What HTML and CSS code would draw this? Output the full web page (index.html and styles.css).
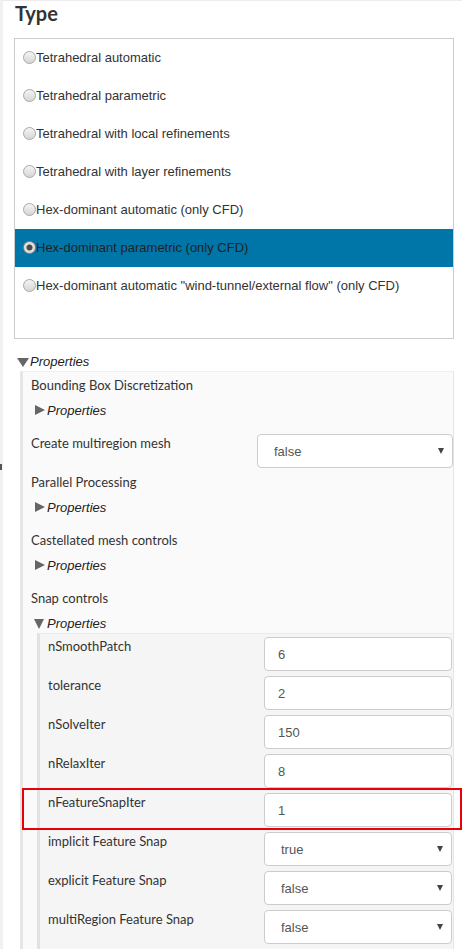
FILE: index.html
```html
<!DOCTYPE html>
<html lang="en">
<head>
<meta charset="utf-8">
<title>Mesh type</title>
<link rel="stylesheet" href="styles.css">
</head>
<body>
<div class="page">
  <div class="edge-mark"></div>
  <h2 class="title">Type</h2>
  <div class="choice-box">
    <div class="choice"><span class="radio"></span>Tetrahedral automatic</div>
    <div class="choice"><span class="radio"></span>Tetrahedral parametric</div>
    <div class="choice"><span class="radio"></span>Tetrahedral with local refinements</div>
    <div class="choice"><span class="radio"></span>Tetrahedral with layer refinements</div>
    <div class="choice"><span class="radio"></span>Hex-dominant automatic (only CFD)</div>
    <div class="choice selected"><span class="radio checked"></span>Hex-dominant parametric (only CFD)</div>
    <div class="choice"><span class="radio"></span>Hex-dominant automatic "wind-tunnel/external flow" (only CFD)</div>
  </div>

  <div class="tree">
    <div class="toggle top-toggle"><span class="caret-down"></span>Properties</div>
    <div class="panel panel1">
      <div class="group-label">Bounding Box Discretization</div>
      <div class="toggle closed"><span class="caret-right"></span>Properties</div>

      <div class="field">
        <div class="label">Create multiregion mesh</div>
        <div class="control select wide"><span>false</span><span class="arrow"></span></div>
      </div>

      <div class="group-label">Parallel Processing</div>
      <div class="toggle closed"><span class="caret-right"></span>Properties</div>

      <div class="group-label">Castellated mesh controls</div>
      <div class="toggle closed"><span class="caret-right"></span>Properties</div>

      <div class="group-label">Snap controls</div>
      <div class="toggle open"><span class="caret-down small"></span>Properties</div>

      <div class="panel panel2">
        <div class="field">
          <div class="label">nSmoothPatch</div>
          <div class="control input">6</div>
        </div>
        <div class="field">
          <div class="label">tolerance</div>
          <div class="control input">2</div>
        </div>
        <div class="field">
          <div class="label">nSolveIter</div>
          <div class="control input">150</div>
        </div>
        <div class="field">
          <div class="label">nRelaxIter</div>
          <div class="control input">8</div>
        </div>
        <div class="field highlight">
          <div class="label">nFeatureSnapIter</div>
          <div class="control input">1</div>
        </div>
        <div class="field">
          <div class="label">implicit Feature Snap</div>
          <div class="control select"><span>true</span><span class="arrow"></span></div>
        </div>
        <div class="field">
          <div class="label">explicit Feature Snap</div>
          <div class="control select"><span>false</span><span class="arrow"></span></div>
        </div>
        <div class="field">
          <div class="label">multiRegion Feature Snap</div>
          <div class="control select"><span>false</span><span class="arrow"></span></div>
        </div>
      </div>
    </div>
  </div>
</div>
</body>
</html>
```
FILE: styles.css
```css
*, *::before, *::after { box-sizing: border-box; }

html, body {
  margin: 0;
  padding: 0;
  background: #fff;
  overflow: hidden;
}

body {
  font-family: "Liberation Sans", Arial, sans-serif;
  font-size: 13px;
  color: #333;
}

.page {
  position: relative;
  min-height: 949px;
  border-left: 3px solid #f1f1f1;
  border-top: 1px solid #ececec;
  padding: 0 8px 0 11px;
}

.edge-mark {
  position: absolute;
  left: -3px;
  top: 463px;
  width: 2px;
  height: 6px;
  background: #555;
}

.title {
  margin: 0 0 13px 1px;
  font-family: Lato, "Liberation Sans", sans-serif;
  font-weight: 700;
  font-size: 20px;
  line-height: 24px;
  color: #333;
}

/* radio list */
.choice-box {
  border: 1px solid #ccc;
  padding-bottom: 33px;
}

.choice {
  display: flex;
  align-items: center;
  height: 38px;
  padding-left: 8px;
  padding-bottom: 1px;
  color: #333;
}

.choice.selected {
  background: #0075a8;
  color: #222;
}

.radio {
  flex: none;
  width: 13px;
  height: 13px;
  border-radius: 50%;
  border: 1px solid #a8a8a8;
  background: linear-gradient(#f4f4f4, #d6d6d6);
}

.radio.checked {
  border-color: #8a8a8a;
  background: radial-gradient(circle, #4a4a4a 0, #4a4a4a 2.6px, #dcdcdc 3.4px, #e6e6e6 100%);
}

/* tree */
.tree {
  margin-top: 12px;
}

.toggle {
  display: flex;
  align-items: center;
  height: 20px;
  font-style: italic;
  color: #222;
}

.top-toggle {
  margin-left: 3px;
}

.caret-down {
  flex: none;
  width: 0;
  height: 0;
  border-left: 6px solid transparent;
  border-right: 6px solid transparent;
  border-top: 9px solid #666;
  margin-right: 1px;
  margin-top: 2px;
}

.caret-down.small {
  border-left-width: 5px;
  border-right-width: 5px;
  border-top-width: 10px;
  margin-right: 3px;
}

.caret-right {
  flex: none;
  width: 0;
  height: 0;
  border-top: 5px solid transparent;
  border-bottom: 5px solid transparent;
  border-left: 10px solid #666;
  margin-right: 2px;
}

.panel1 {
  margin-left: 6px;
  border-left: 3px solid #e6e6e6;
  border-top: 1px solid #efefef;
  border-right: 1px solid #e6e6e6;
  background: #fafafa;
  padding: 3px 0 0 8px;
}

.panel1 > .toggle.closed {
  margin-left: 4px;
  margin-bottom: 13px;
}

.panel1 > .toggle.open {
  margin-left: 3px;
}

.group-label,
.label {
  font-family: Lato, "Liberation Sans", sans-serif;
  font-size: 13px;
  line-height: 20px;
  color: #333;
}

.group-label {
  height: 20px;
  margin-bottom: 5px;
}

.field {
  display: flex;
  align-items: flex-start;
  margin-bottom: 4px;
}

.field .label {
  flex: 1;
}

.control {
  flex: none;
  width: 188px;
  height: 34px;
  margin-top: 1px;
  border: 1px solid #ccc;
  border-radius: 4px;
  background: #fff;
  display: flex;
  align-items: center;
  font-size: 13px;
  color: #555;
}

.control.wide {
  width: 196px;
}

.input {
  padding: 0 12px 0 13px;
}

.select {
  justify-content: space-between;
  padding: 0 8px 0 16px;
}

.arrow {
  width: 0;
  height: 0;
  border-left: 3.5px solid transparent;
  border-right: 3.5px solid transparent;
  border-top: 6px solid #444;
}

.panel2 {
  margin-left: 6px;
  border-left: 3px solid #e2e2e2;
  border-top: 1px solid #ebebeb;
  background: #f5f5f5;
  padding: 2px 1px 2px 8px;
}

.highlight {
  position: relative;
}

.highlight::after {
  content: "";
  position: absolute;
  left: -26px;
  top: -4px;
  width: 440px;
  height: 42px;
  border: 2px solid #e8000b;
  pointer-events: none;
}
```
